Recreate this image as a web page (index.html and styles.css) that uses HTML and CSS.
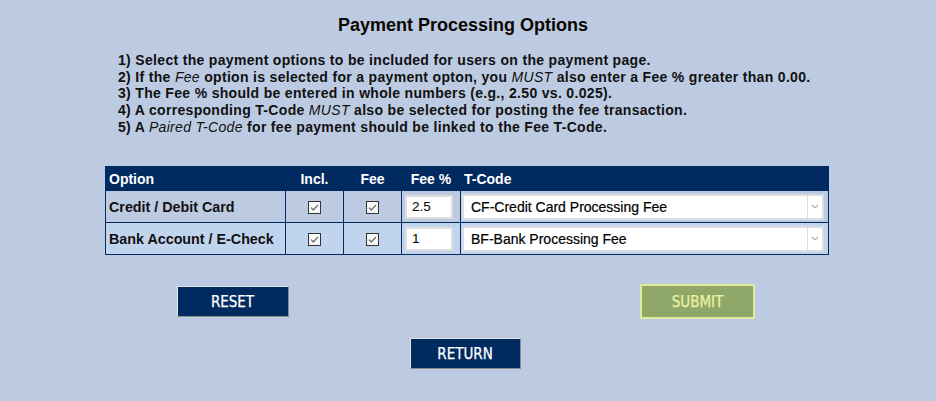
FILE: index.html
```html
<!DOCTYPE html>
<html lang="en">
<head>
<meta charset="utf-8">
<title>Payment Processing Options</title>
<link rel="stylesheet" href="styles.css">
</head>
<body>
<div class="page">
  <h1 class="title">Payment Processing Options</h1>
  <div class="notes">
    <div>1) Select the payment options to be included for users on the payment page.</div>
    <div>2) If the <em>Fee</em> option is selected for a payment opton, you <em>MUST</em> also enter a Fee % greater than 0.00.</div>
    <div>3) The Fee % should be entered in whole numbers (e.g., 2.50 vs. 0.025).</div>
    <div>4) A corresponding T-Code <em>MUST</em> also be selected for posting the fee transaction.</div>
    <div>5) A <em>Paired T-Code</em> for fee payment should be linked to the Fee T-Code.</div>
  </div>

  <table class="opts">
    <colgroup>
      <col class="c-opt"><col class="c-chk"><col class="c-chk"><col class="c-pct"><col class="c-code">
    </colgroup>
    <thead>
      <tr>
        <th class="left">Option</th>
        <th>Incl.</th>
        <th>Fee</th>
        <th>Fee %</th>
        <th class="left">T-Code</th>
      </tr>
    </thead>
    <tbody>
      <tr class="row-a">
        <td class="label">Credit / Debit Card</td>
        <td class="ctr"><span class="cb"><svg viewBox="0 0 11 11" width="11" height="11"><path d="M2.2 5.6 L4.4 7.9 L8.9 3.1" fill="none" stroke="#5a5a5a" stroke-width="1.1"/></svg></span></td>
        <td class="ctr"><span class="cb"><svg viewBox="0 0 11 11" width="11" height="11"><path d="M2.2 5.6 L4.4 7.9 L8.9 3.1" fill="none" stroke="#5a5a5a" stroke-width="1.1"/></svg></span></td>
        <td class="pct"><span class="num">2.5</span></td>
        <td class="code"><div class="sel"><span class="sel-text">CF-Credit Card Processing Fee</span><span class="sel-arrow"><svg viewBox="0 0 8 5" width="8" height="5"><path d="M0.8 1 L4 3.8 L7.2 1" fill="none" stroke="#b0b0b0" stroke-width="1.2"/></svg></span></div></td>
      </tr>
      <tr class="row-b">
        <td class="label">Bank Account / E-Check</td>
        <td class="ctr"><span class="cb"><svg viewBox="0 0 11 11" width="11" height="11"><path d="M2.2 5.6 L4.4 7.9 L8.9 3.1" fill="none" stroke="#5a5a5a" stroke-width="1.1"/></svg></span></td>
        <td class="ctr"><span class="cb"><svg viewBox="0 0 11 11" width="11" height="11"><path d="M2.2 5.6 L4.4 7.9 L8.9 3.1" fill="none" stroke="#5a5a5a" stroke-width="1.1"/></svg></span></td>
        <td class="pct"><span class="num">1</span></td>
        <td class="code"><div class="sel"><span class="sel-text">BF-Bank Processing Fee</span><span class="sel-arrow"><svg viewBox="0 0 8 5" width="8" height="5"><path d="M0.8 1 L4 3.8 L7.2 1" fill="none" stroke="#b0b0b0" stroke-width="1.2"/></svg></span></div></td>
      </tr>
    </tbody>
  </table>

  <div class="actions">
    <span class="btn btn-navy">RESET</span>
    <span class="btn btn-submit">SUBMIT</span>
  </div>
  <div class="return-row">
    <span class="btn btn-navy btn-return">RETURN</span>
  </div>
</div>
</body>
</html>
```

FILE: styles.css
```css
body {
  margin: 0;
  background: #bdcbe2;
  font-family: "Liberation Sans", Arial, sans-serif;
  color: #000;
}

.page {
  width: 936px;
}

.title {
  margin: 0;
  padding: 15px 10px 0 0;
  font-size: 18px;
  line-height: 21px;
  font-weight: bold;
  text-align: center;
  color: #0b0600;
}

.notes {
  margin-top: 16px;
  padding-left: 118px;
  font-size: 14px;
  letter-spacing: 0.32px;
  font-weight: bold;
  line-height: 16.67px;
  color: #111;
}

.notes em {
  font-weight: normal;
}

.opts {
  margin: 31px 0 0 105px;
  width: 723px;
  table-layout: fixed;
  border-collapse: collapse;
  border: 1px solid #012a61;
}

.c-opt { width: 180px; }
.c-chk { width: 58px; }
.c-pct { width: 59px; }
.c-code { width: 368px; }

.opts th,
.opts td {
  border: 1px solid #012a61;
  padding: 0 3px;
}

.opts th {
  background: #012a61;
  color: #fff;
  font-size: 14px;
  font-weight: bold;
  height: 23px;
  text-align: center;
}

.opts th.left {
  text-align: left;
}

.opts td {
  height: 31px;
}

.row-a { background: #bdcbe2; }
.row-b { background: #c1d4ee; }

.label {
  font-size: 14.3px;
  font-weight: bold;
  color: #111;
}

.ctr {
  text-align: center;
}

.cb {
  display: inline-flex;
  align-items: center;
  justify-content: center;
  width: 11px;
  height: 11px;
  border: 1px solid #333;
  background: #f7f7f7;
  vertical-align: middle;
}

.cb svg {
  display: block;
}

.opts td.pct {
  padding: 0 0 0 3px;
}

.num {
  display: block;
  box-sizing: border-box;
  width: 48px;
  height: 24px;
  border: 2px solid #dedede;
  background: #fff;
  padding: 0 0 0 5px;
  font-size: 13.5px;
  line-height: 20px;
  color: #000;
}

.opts td.code {
  padding: 0 4px 0 1px;
}

.sel {
  display: flex;
  box-sizing: border-box;
  height: 26px;
  border: 2px solid #dedede;
  background: #fff;
}

.sel-text {
  flex: 1;
  padding-left: 7px;
  font-size: 14px;
  line-height: 22px;
  color: #000;
  -webkit-text-stroke: 0.2px #000;
}

.sel-arrow {
  width: 14px;
  border-left: 1px solid #dedede;
  display: flex;
  align-items: center;
  justify-content: center;
}

.sel-arrow svg {
  display: block;
}

.actions {
  width: 930px;
  margin-top: 29px;
  display: grid;
  grid-template-columns: 1fr 1fr;
  align-items: center;
  justify-items: center;
}

.return-row {
  width: 930px;
  margin-top: 19px;
  display: flex;
  justify-content: center;
}

.btn {
  display: flex;
  align-items: center;
  justify-content: center;
  box-sizing: border-box;
  font-family: "Liberation Sans Narrow", "Arial Narrow", "DejaVu Sans Condensed", sans-serif;
  font-size: 15px;
  -webkit-text-stroke: 0.25px currentColor;
}

.btn-navy {
  width: 112px;
  height: 31px;
  background: #012a61;
  color: #fff;
  border: 1px solid;
  border-color: #e4e4e4 #8d8d8d #8d8d8d #e4e4e4;
}

.btn-return {
  width: 111px;
}

.btn-submit {
  width: 115px;
  height: 35px;
  background: #8fa86a;
  color: #eef3a0;
  border: 2px solid #e0ec9b;
}
```
